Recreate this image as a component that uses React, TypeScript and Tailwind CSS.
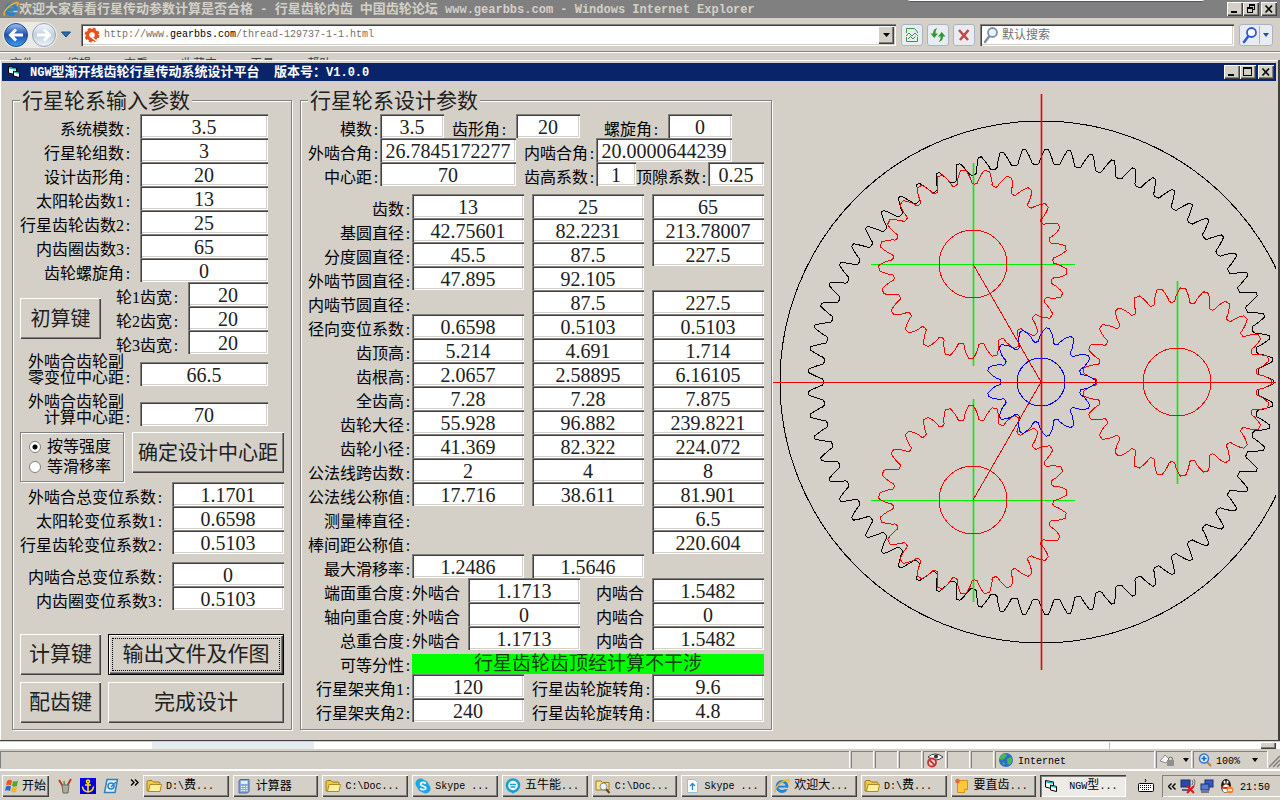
import { useId, type ReactNode } from "react";

const RAISED =
  "bg-[#d4d0c8] shadow-[inset_1px_1px_0_#fff,inset_-1px_-1px_0_#404040,inset_-2px_-2px_0_#808080]";
const SUNKEN =
  "bg-white shadow-[inset_1px_1px_0_#808080,inset_2px_2px_0_#404040,inset_-1px_-1px_0_#fff,inset_-2px_-2px_0_#d4d0c8]";

/* ---------- text helpers ---------- */

/** Small UI text: Chinese at the inherited size, Latin runs in a narrower mono. */
function Mixed({ text, latin = "text-[10px]" }: { text: string; latin?: string }) {
  return (
    <span className="whitespace-pre">
      {text.split(/([\x20-\x7e]+)/).map((part, i) =>
        i % 2 === 1 ? (
          <span key={i} className={`font-['Liberation_Mono',monospace] ${latin}`}>
            {part}
          </span>
        ) : (
          part
        ),
      )}
    </span>
  );
}

function LabelText({ text }: { text: string }) {
  if (!text.endsWith(":")) return <>{text}</>;
  return (
    <>
      {text.slice(0, -1)}
      <span className="inline-block w-2 text-center">:</span>
    </>
  );
}

function FieldLabel({
  id,
  htmlFor,
  text,
  className = "",
}: {
  id?: string;
  htmlFor?: string;
  text: string;
  className?: string;
}) {
  return (
    <label
      id={id}
      htmlFor={htmlFor}
      className={`block h-6 shrink-0 text-right text-base leading-8 whitespace-nowrap ${className}`}
    >
      <LabelText text={text} />
    </label>
  );
}

function Box({
  id,
  labelledBy,
  value,
  width,
}: {
  id?: string;
  labelledBy?: string;
  value: string;
  width: string;
}) {
  return (
    <input
      id={id}
      aria-labelledby={labelledBy}
      defaultValue={value}
      className={`h-6 shrink-0 pt-0.5 text-center text-xl leading-[22px] text-[#202020] outline-none ${SUNKEN} ${width}`}
    />
  );
}

/** Label followed by one text box. */
function Field({
  label,
  value,
  labelWidth,
  width,
  gap = "gap-2",
}: {
  label: string;
  value: string;
  labelWidth: string;
  width: string;
  gap?: string;
}) {
  const id = useId();
  return (
    <div className={`flex ${gap}`}>
      <FieldLabel htmlFor={id} text={label} className={labelWidth} />
      <Box id={id} value={value} width={width} />
    </div>
  );
}

/** Text box whose label takes two lines. */
function TallField({ top, bottom, value }: { top: string; bottom: string; value: string }) {
  const id = useId();
  return (
    <div className="flex items-end gap-2">
      <label htmlFor={id} className="block w-28 text-right text-base leading-4">
        <span className="block pr-2">{top}</span>
        <LabelText text={bottom} />
      </label>
      <Box id={id} value={value} width="w-32" />
    </div>
  );
}

function PushButton({
  children,
  className = "",
  focused = false,
}: {
  children: ReactNode;
  className?: string;
  focused?: boolean;
}) {
  return (
    <button
      type="button"
      className={`flex h-[41px] shrink-0 items-center justify-center whitespace-nowrap text-[#202020] ${RAISED} ${
        focused ? "border border-black p-[3px]" : ""
      } ${className}`}
    >
      {focused ? (
        <span className="flex h-full w-full items-center justify-center border border-dotted border-black">
          {children}
        </span>
      ) : (
        children
      )}
    </button>
  );
}

function GroupBox({
  title,
  className = "",
  children,
}: {
  title: string;
  className?: string;
  children: ReactNode;
}) {
  return (
    <fieldset
      className={`relative shrink-0 border border-[#808080] px-[7px] pt-[13px] pb-[6px] shadow-[1px_1px_0_#fff,inset_1px_1px_0_#fff] ${className}`}
    >
      <legend className="absolute -top-3 left-[7px] bg-[#d4d0c8] px-0.5 text-[21px] leading-6 text-[#202020]">
        {title}
      </legend>
      {children}
    </fieldset>
  );
}

/* ---------- input panel ---------- */

const INPUTS = [
  ["系统模数:", "3.5"],
  ["行星轮组数:", "3"],
  ["设计齿形角:", "20"],
  ["太阳轮齿数1:", "13"],
  ["行星齿轮齿数2:", "25"],
  ["内齿圈齿数3:", "65"],
  ["齿轮螺旋角:", "0"],
];

const OUTER_SHIFT = [
  ["外啮合总变位系数:", "1.1701"],
  ["太阳轮变位系数1:", "0.6598"],
  ["行星齿轮变位系数2:", "0.5103"],
];

const INNER_SHIFT = [
  ["内啮合总变位系数:", "0"],
  ["内齿圈变位系数3:", "0.5103"],
];

const RADIO =
  "size-3 appearance-none rounded-full border border-[#808080] bg-white checked:bg-[radial-gradient(circle,#000_2px,#fff_3px)]";

function InputPanel() {
  return (
    <GroupBox title="行星轮系输入参数" className="w-[280px]">
      {INPUTS.map(([label, value]) => (
        <Field key={label} label={label} value={value} labelWidth="w-28" width="w-32" />
      ))}
      <div className="flex justify-between pr-4">
        <PushButton className="mt-4 w-[81px] text-xl">初算键</PushButton>
        <div>
          <Field label="轮1齿宽:" value="20" labelWidth="w-16" width="w-20" />
          <Field label="轮2齿宽:" value="20" labelWidth="w-16" width="w-20" />
          <Field label="轮3齿宽:" value="20" labelWidth="w-16" width="w-20" />
        </div>
      </div>
      <TallField top="外啮合齿轮副" bottom="零变位中心距:" value="66.5" />
      <div className="mt-2">
        <TallField top="外啮合齿轮副" bottom="计算中心距:" value="70" />
      </div>
      <div className="mt-[6px] flex items-start justify-between">
        <div className="flex h-[50px] w-[104px] flex-col justify-center border border-[#808080] pl-2 text-base leading-5 shadow-[1px_1px_0_#fff,inset_1px_1px_0_#fff]">
          <label className="flex items-center gap-1.5">
            <input type="radio" name="method" defaultChecked className={RADIO} />
            按等强度
          </label>
          <label className="flex items-center gap-1.5">
            <input type="radio" name="method" className={RADIO} />
            等滑移率
          </label>
        </div>
        <PushButton className="w-[152px] text-xl">确定设计中心距</PushButton>
      </div>
      {OUTER_SHIFT.map(([label, value]) => (
        <Field key={label} label={label} value={value} labelWidth="w-36" width="w-28" />
      ))}
      <div className="mt-2">
        {INNER_SHIFT.map(([label, value]) => (
          <Field key={label} label={label} value={value} labelWidth="w-36" width="w-28" />
        ))}
      </div>
      <div className="mt-6 grid grid-cols-[81px_1fr] gap-[7px] text-[21px]">
        <PushButton>计算键</PushButton>
        <PushButton focused>输出文件及作图</PushButton>
        <PushButton>配齿键</PushButton>
        <PushButton>完成设计</PushButton>
      </div>
    </GroupBox>
  );
}

/* ---------- design panel ---------- */

// sun, planet, ring
const DESIGN: [string, string, string, string][] = [
  ["齿数:", "13", "25", "65"],
  ["基圆直径:", "42.75601", "82.2231", "213.78007"],
  ["分度圆直径:", "45.5", "87.5", "227.5"],
  ["外啮节圆直径:", "47.895", "92.105", ""],
  ["内啮节圆直径:", "", "87.5", "227.5"],
  ["径向变位系数:", "0.6598", "0.5103", "0.5103"],
  ["齿顶高:", "5.214", "4.691", "1.714"],
  ["齿根高:", "2.0657", "2.58895", "6.16105"],
  ["全齿高:", "7.28", "7.28", "7.875"],
  ["齿轮大径:", "55.928", "96.882", "239.8221"],
  ["齿轮小径:", "41.369", "82.322", "224.072"],
  ["公法线跨齿数:", "2", "4", "8"],
  ["公法线公称值:", "17.716", "38.611", "81.901"],
  ["测量棒直径:", "", "", "6.5"],
  ["棒间距公称值:", "", "", "220.604"],
  ["最大滑移率:", "1.2486", "1.5646", ""],
];

const OVERLAP = [
  ["端面重合度:", "1.1713", "1.5482"],
  ["轴向重合度:", "0", "0"],
  ["总重合度:", "1.1713", "1.5482"],
];

const ANGLES = [
  ["行星架夹角1:", "120", "9.6"],
  ["行星架夹角2:", "240", "4.8"],
];

function DesignRow({ row }: { row: [string, string, string, string] }) {
  const id = useId();
  const [label, ...values] = row;
  return (
    <div className="grid grid-cols-[96px_112px_112px_112px] gap-x-2">
      <FieldLabel id={id} text={label} className="-mr-2" />
      {values.map((value, i) =>
        value ? <Box key={i} labelledBy={id} value={value} width="w-28" /> : <span key={i} />,
      )}
    </div>
  );
}

function OverlapRow({ label, outer, inner }: { label: string; outer: string; inner: string }) {
  const id = useId();
  return (
    <div className="flex">
      <FieldLabel id={id} text={label} className="w-[104px]" />
      <FieldLabel id={`${id}-o`} text="外啮合" className="w-12" />
      <div className="ml-2 flex">
        <Box labelledBy={`${id} ${id}-o`} value={outer} width="w-28" />
      </div>
      <FieldLabel id={`${id}-i`} text="内啮合" className="ml-4 w-12" />
      <div className="ml-auto flex">
        <Box labelledBy={`${id} ${id}-i`} value={inner} width="w-28" />
      </div>
    </div>
  );
}

function DesignPanel() {
  return (
    <GroupBox title="行星轮系设计参数" className="w-[472px]">
      <div className="flex">
        <Field label="模数:" value="3.5" labelWidth="w-[72px]" width="w-16" gap="gap-0" />
        <Field label="齿形角:" value="20" labelWidth="w-16" width="w-16" />
        <Field label="螺旋角:" value="0" labelWidth="w-20" width="w-16" />
      </div>
      <div className="flex">
        <Field label="外啮合角:" value="26.7845172277" labelWidth="w-[72px]" width="w-[136px]" gap="gap-0" />
        <Field label="内啮合角:" value="20.0000644239" labelWidth="w-20" width="w-[136px]" gap="gap-0" />
      </div>
      <div className="flex">
        <Field label="中心距:" value="70" labelWidth="w-[72px]" width="w-[136px]" gap="gap-0" />
        <Field label="齿高系数:" value="1" labelWidth="w-20" width="w-10" gap="gap-0" />
        <Field label="顶隙系数:" value="0.25" labelWidth="w-[72px]" width="w-14" gap="gap-0" />
      </div>
      <div className="mt-2">
        {DESIGN.map((row) => (
          <DesignRow key={row[0]} row={row} />
        ))}
        {OVERLAP.map(([label, outer, inner]) => (
          <OverlapRow key={label} label={label} outer={outer} inner={inner} />
        ))}
      </div>
      <div className="flex items-end">
        <span className="block h-6 w-[104px] text-right text-base leading-8">
          <LabelText text="可等分性:" />
        </span>
        <output className="block h-5 flex-1 bg-[#00ff00] text-center text-[19px] leading-5 text-[#104010]">
          行星齿轮齿顶经计算不干涉
        </output>
      </div>
      {ANGLES.map(([label, carrier, planet]) => (
        <div key={label} className="flex justify-between">
          <Field label={label} value={carrier} labelWidth="w-[104px]" width="w-28" gap="gap-0" />
          <Field label="行星齿轮旋转角:" value={planet} labelWidth="w-32" width="w-28" gap="gap-0" />
        </div>
      ))}
    </GroupBox>
  );
}

/* ---------- gear drawing ---------- */

const SCALE = 136 / 70; // px per mm
const ALPHA = (20 * Math.PI) / 180;

type Gear = { z: number; x: number; base: number; inner: number; outer: number };

const SUN: Gear = { z: 13, x: 0.6598, base: 21.378, inner: 20.685, outer: 27.964 };
const PLANET: Gear = { z: 25, x: 0.5103, base: 41.112, inner: 41.161, outer: 48.441 };
const RING: Gear = { z: 65, x: 0.5103, base: 106.89, inner: 112.036, outer: 119.911 };

/** Involute outline, first tooth centred on `phase` degrees (clockwise). */
function gearPath({ z, x, base, inner, outer }: Gear, cx: number, cy: number, phase: number) {
  const inv = (r: number) => (r <= base ? 0 : Math.sqrt((r / base) ** 2 - 1) - Math.acos(base / r));
  const half = (r: number) =>
    (Math.PI / 2 + 2 * x * Math.tan(ALPHA)) / z + Math.tan(ALPHA) - ALPHA - inv(r);
  const at = (r: number, a: number) =>
    `${(cx + r * SCALE * Math.cos(a)).toFixed(2)} ${(cy + r * SCALE * Math.sin(a)).toFixed(2)}`;

  const steps = 6;
  const foot = inner + (outer - inner) * 0.2;
  let d = "";
  for (let i = 0; i < z; i++) {
    const mid = (phase * Math.PI) / 180 + (i * 2 * Math.PI) / z;
    const gap = Math.PI / z;
    if (i === 0) d += `M${at(inner, mid - gap)}`;
    d += `Q${at(inner, mid - half(foot))} ${at(foot, mid - half(foot))}`;
    for (let s = 1; s <= steps; s++) {
      const r = foot + ((outer - foot) * s) / steps;
      d += `L${at(r, mid - half(r))}`;
    }
    for (let s = steps; s >= 0; s--) {
      const r = foot + ((outer - foot) * s) / steps;
      d += `L${at(r, mid + half(r))}`;
    }
    d += `Q${at(inner, mid + half(foot))} ${at(inner, mid + gap)}`;
  }
  return d + "Z";
}

const PLANETS = [
  { cx: 405, cy: 301, phase: 0 },
  { cx: 201, cy: 183, phase: 4.8 },
  { cx: 201, cy: 419, phase: -4.8 },
];

function AxisLine({ x, y, height, color }: { x: number; y: number; height: number; color: string }) {
  return (
    <line
      x1={x + 0.5}
      x2={x + 0.5}
      y1={y}
      y2={y + height}
      stroke={color}
      strokeWidth="1.6"
      shapeRendering="geometricPrecision"
    />
  );
}

function GearDrawing() {
  return (
    <svg className="min-w-0 flex-1 self-stretch" fill="none" shapeRendering="crispEdges" role="img">
      <circle cx="269" cy="301" r="261" stroke="#000" />
      <path d={gearPath(RING, 269, 301, 0)} stroke="#000" />
      {PLANETS.map(({ cx, cy, phase }) => (
        <g key={cy}>
          {cx < 269 && <rect x={cx - 102} y={cy} width="204" height="1" fill="#00ee00" />}
          <AxisLine x={cx} y={cy - 101} height={203} color="#00ee00" />
          <circle cx={cx} cy={cy} r="34" stroke="#f00" />
          <path d={gearPath(PLANET, cx, cy, phase)} stroke="#f00" />
        </g>
      ))}
      <path d={gearPath(SUN, 269, 301, 0)} stroke="#00f" />
      <circle cx="269" cy="301" r="24" stroke="#00f" />
      <path d="M201 183l68 118l-68 118" stroke="#e60000" />
      <AxisLine x={269} y={13} height={576} color="#e60000" />
      <rect x="1" y="301" width="100%" height="1" fill="#e60000" />
    </svg>
  );
}

/* ---------- window chrome ---------- */

function CaptionButtons({ restore = false }: { restore?: boolean }) {
  const button = `flex h-[14px] w-4 items-center justify-center ${RAISED}`;
  return (
    <div className="ml-auto flex">
      <button type="button" aria-label="最小化" className={button}>
        <svg width="10" height="10" fill="#000">
          <rect x="1" y="7" width="6" height="2" />
        </svg>
      </button>
      <button type="button" aria-label="最大化" className={button}>
        <svg width="10" height="10" fill="none" stroke="#000" shapeRendering="crispEdges">
          {restore ? (
            <path d="M3.500 3V1M3 1h6M3 .5h6M8.500 1v4.500M7 5.500h2M1 3.500h6M1 4.500h6M1.500 4v5M6.500 4v5M1 8.500h6" />
          ) : (
            <path d="M.5.5h8v8h-8zM0 1.500h9" />
          )}
        </svg>
      </button>
      <button type="button" aria-label="关闭" className={`ml-0.5 ${button}`}>
        <svg width="10" height="10" stroke="#000" strokeWidth="1.600">
          <path d="M1.500 1.500l6.500 7M8 1.500l-6.500 7" />
        </svg>
      </button>
    </div>
  );
}

function IeIcon() {
  return (
    <svg width="16" height="16" viewBox="0 0 16 16" fill="none" className="shrink-0">
      <circle cx="8" cy="8.500" r="5" stroke="#1c86dc" strokeWidth="2.800" />
      <path d="M4 8.600h9" stroke="#1c86dc" strokeWidth="2" />
      <path d="M10.500 10.500h4" stroke="#d4d0c8" strokeWidth="1.500" />
      <path d="M1.500 14.500C-.5 11 6 3 14.500 1.500c1 1 .3 2.500-.5 3.500" stroke="#f0b429" strokeWidth="1.500" />
    </svg>
  );
}

/** Two stacked little forms, outlined for light or dark bars. */
function FormIcon() {
  return (
    <svg width="16" height="16" viewBox="0 0 16 16" className="shrink-0">
      <path d="M2.500 2.500l8 1.500v7l-8-2z" fill="#fff" stroke="#000" />
      <path d="M3 3l7 1.300v1.500L3 4.500z" fill="#10b0b0" />
      <path d="M7.500 7l6 1.500v5l-6-1.500z" fill="#fff" stroke="#000" />
      <path d="M8 7.600l5 1.200v1.200L8 8.800z" fill="#10c0c0" />
    </svg>
  );
}

function NavButton({ forward = false }: { forward?: boolean }) {
  return (
    <button type="button" aria-label={forward ? "前进" : "后退"}>
      <svg width="26" height="26" viewBox="0 0 26 26">
        <defs>
          <linearGradient id={forward ? "fwd" : "back"} x1="0" y1="0" x2="0" y2="1">
            <stop offset="0" stopColor={forward ? "#f4f7fb" : "#9fc0ee"} />
            <stop offset="0.5" stopColor={forward ? "#c3cfde" : "#1d4fae"} />
            <stop offset="1" stopColor={forward ? "#eef3f9" : "#3fa0f0"} />
          </linearGradient>
        </defs>
        <circle
          cx="13"
          cy="13"
          r="11.500"
          fill={forward ? "url(#fwd)" : "url(#back)"}
          stroke={forward ? "#98a4b4" : "#234a8c"}
        />
        <path
          d={forward ? "M6 13h12M13 7.500l5.500 5.500-5.500 5.500" : "M20 13H8M13 7.500L7.500 13l5.500 5.500"}
          fill="none"
          stroke="#fff"
          strokeWidth="3"
        />
      </svg>
    </button>
  );
}

function Magnifier({ color, fill = "#e8f2fc" }: { color: string; fill?: string }) {
  return (
    <svg width="16" height="18" viewBox="0 0 16 18" className="shrink-0">
      <path d="M6.500 10L2 16" stroke={color} strokeWidth="2.500" strokeLinecap="round" />
      <circle cx="9.500" cy="6.500" r="4.500" fill={fill} stroke={color} strokeWidth="1.800" />
    </svg>
  );
}

const TOOL = "flex h-[22px] w-[22px] items-center justify-center rounded-[3px] border border-[#a9b4c2] bg-[#e9edf2]";
const MENU = ["文件(F)", "编辑(E)", "查看(V)", "收藏夹(A)", "工具(T)", "帮助(H)"];

function BrowserTop() {
  return (
    <header>
      <div className="relative flex h-[18px] items-center bg-[#808080] pr-[3px] pl-[3px] text-[13px] leading-4 font-bold text-[#d4d0c8]">
        <IeIcon />
        <Mixed
          text="欢迎大家看看行星传动参数计算是否合格 - 行星齿轮内齿 中国齿轮论坛 www.gearbbs.com - Windows Internet Explorer"
          latin="text-xs"
        />
        <span className="absolute top-0 right-[76px] h-0.5 w-[296px] rounded-b border-b border-[#38606c] bg-white" />
        <CaptionButtons restore />
      </div>
      <div className="flex h-[34px] items-center border-b border-[#808080] pr-[7px] pl-[3px]">
        <div className="flex items-center gap-0.5 rounded-full bg-[#eceae6]">
          <NavButton />
          <NavButton forward />
        </div>
        <button type="button" aria-label="历史" className="mr-[10px] ml-[4px]">
          <svg width="10" height="7" viewBox="0 0 10 7">
            <path d="M.5 1h9L5 6z" fill="#2a70a8" stroke="#184a78" />
          </svg>
        </button>
        <div className={`flex h-[22px] min-w-0 flex-1 items-center pr-0.5 pl-[3px] ${SUNKEN}`}>
          <svg width="16" height="16" viewBox="0 0 16 16" className="shrink-0">
            <circle cx="8" cy="8" r="4.500" fill="none" stroke="#e8501c" strokeWidth="3.500" />
            <circle cx="8" cy="8" r="6.500" fill="none" stroke="#e8501c" strokeWidth="2" strokeDasharray="3 2.100" />
            <path d="M8 10.500l5 4" stroke="#fff" strokeWidth="1.500" />
          </svg>
          <div
            role="textbox"
            aria-label="地址"
            contentEditable
            suppressContentEditableWarning
            className="ml-1 min-w-0 flex-1 font-['Liberation_Mono',monospace] text-[10px] whitespace-nowrap text-[#707070] outline-none"
          >
            http://www.<span className="text-black">gearbbs.com</span>/thread-129737-1-1.html
          </div>
          <button type="button" aria-label="展开" className={`flex h-[18px] w-4 items-center justify-center ${RAISED}`}>
            <svg width="7" height="4">
              <path d="M0 0h7L3.500 4z" />
            </svg>
          </button>
        </div>
        <div className="ml-[5px] flex gap-1">
          <button type="button" aria-label="兼容性视图" className={TOOL}>
            <svg width="14" height="16" viewBox="0 0 14 16" fill="none" stroke="#3c9448">
              <path d="M1.500 6V1.500h8L12.500 5v1M1.500 10v4.500h11V10" />
              <path d="M1 9l3-3 3 3 3-3 3 3M3 12l2.500-2.500L8 12l2.500-2.500" />
            </svg>
          </button>
          <button type="button" aria-label="刷新" className={TOOL}>
            <svg width="16" height="16" viewBox="0 0 16 16" fill="#2f9a2f">
              <path d="M7.500 1C4.500 1.500 3 3.500 3 6.500H.5L4.300 11 8 6.500H5.500C5.500 4 6 2.500 7.500 1z" />
              <path d="M8.500 15c3-.5 4.500-2.500 4.500-5.500h2.500L11.700 5 8 9.500h2.500c0 2.500-.5 4-2 5.500z" />
            </svg>
          </button>
          <button type="button" aria-label="停止" className={TOOL}>
            <svg width="14" height="14" stroke="#c04848" strokeWidth="2.600">
              <path d="M2 2l9 10M11.500 2L3 12" />
            </svg>
          </button>
        </div>
        <label className={`ml-[5px] flex h-[22px] w-[254px] items-center pl-[3px] ${SUNKEN}`}>
          <Magnifier color="#8090a8" />
          <input
            aria-label="搜索"
            placeholder="默认搜索"
            className="ml-[3px] min-w-0 flex-1 bg-transparent text-xs outline-none placeholder:text-[#707070]"
          />
        </label>
        <div className="ml-[5px] flex h-[22px] w-[34px] items-center rounded-[3px] border border-[#a9b4c2] bg-[#e9edf2]">
          <button type="button" aria-label="搜索" className="flex w-5 justify-center border-r border-[#a9b4c2]">
            <Magnifier color="#2a58d8" fill="#fff" />
          </button>
          <button type="button" aria-label="搜索选项" className="flex flex-1 justify-center">
            <svg width="6" height="4">
              <path d="M0 0h6L3 4z" fill="#2050a0" />
            </svg>
          </button>
        </div>
      </div>
      <nav className="flex h-2 gap-[15px] overflow-hidden border-t border-white pt-[3px] pl-[10px] text-xs leading-4 text-[#404040]">
        {MENU.map((item) => (
          <Mixed key={item} text={item} />
        ))}
      </nav>
    </header>
  );
}

/* ---------- status bar and taskbar ---------- */

const PANE = "h-[17px] shrink-0 border-t border-l border-[#808080] shadow-[1px_0_0_#fff]";

function StatusBar() {
  return (
    <div className="flex h-[18px] gap-0.5 text-xs">
      <div className={`${PANE} min-w-0 flex-1`} />
      <div className={`${PANE} w-[22px]`} />
      <div className={`${PANE} w-[22px]`} />
      <div className={`${PANE} w-[22px]`} />
      <div className={`${PANE} flex w-[22px] items-center justify-center`}>
        <svg width="18" height="16" viewBox="0 0 18 16" fill="none">
          <path d="M2 5q7-6 15 0q-7 6-15 0z" fill="#fff" stroke="#404040" />
          <circle cx="10" cy="4.500" r="2" fill="#303030" />
          <circle cx="6" cy="10.500" r="4" fill="#f0d8d8" stroke="#c83030" strokeWidth="1.800" />
          <path d="M3.500 8l5 5" stroke="#c83030" strokeWidth="1.800" />
        </svg>
      </div>
      <div className={`${PANE} w-[22px]`} />
      <div className={`${PANE} w-[22px]`} />
      <div className={`${PANE} flex w-[159px] items-center gap-1 pl-0.5`}>
        <svg width="16" height="16" viewBox="0 0 16 16">
          <circle cx="8" cy="8" r="7" fill="#2a6fd0" />
          <path d="M4 2.500q4-2 5 1L6 7 3 8 1.500 6zM9 7l4-2 1.500 3-2.500 5-2.500-1zM4 10l3 1-1 3z" fill="#4cb84c" />
        </svg>
        <Mixed text="Internet" />
      </div>
      <button type="button" aria-label="保护模式" className={`${PANE} flex w-[35px] items-center justify-center gap-2`}>
        <svg width="16" height="14" viewBox="0 0 16 14">
          <path d="M1 8l5-6 4 4-3 4z" fill="#f4f4f4" stroke="#909090" />
          <rect x="8" y="7" width="7" height="6" fill="#909090" />
          <path d="M9.500 7V5q2-2 4 0v2" fill="none" stroke="#707070" />
        </svg>
        <svg width="6" height="4">
          <path d="M0 0h6L3 4z" />
        </svg>
      </button>
      <button type="button" className={`${PANE} flex w-[74px] items-center pl-1`}>
        <svg width="14" height="14" viewBox="0 0 14 14" fill="none">
          <path d="M9 9l4 4" stroke="#c08030" strokeWidth="2" />
          <circle cx="6" cy="5.500" r="4.500" fill="#d8ecff" stroke="#3878d0" strokeWidth="1.500" />
          <path d="M3.500 5.500h5M6 3v5" stroke="#2060c0" strokeWidth="1.500" />
        </svg>
        <span className="mx-1">
          <Mixed text="100%" />
        </span>
        <svg width="6" height="4" className="ml-2">
          <path d="M0 0h6L3 4z" />
        </svg>
      </button>
      <svg width="11" height="17" className="shrink-0" stroke="#808080" strokeWidth="1.500">
        <path d="M0 16L11 5M4 16l7-7M8 16l3-3" />
      </svg>
    </div>
  );
}

function FolderIcon() {
  return (
    <svg width="16" height="16" viewBox="0 0 16 16" className="shrink-0">
      <path d="M1 13V4q0-1.500 1.500-1.500H6L7.500 4H13q1 0 1 1.500V13z" fill="#f0c848" stroke="#a07818" />
      <path d="M2.500 13.500L4 6.500h11.500L14 13.500z" fill="#fff0a0" stroke="#b08820" />
    </svg>
  );
}

function CalculatorIcon() {
  return (
    <svg width="16" height="16" viewBox="0 0 16 16" className="shrink-0">
      <path d="M4 1.500h9v12l-1.500 1.500H3V3z" fill="#86a8e0" stroke="#4868a8" />
      <path d="M5 3h6.500v3H5z" fill="#e4f0ff" />
      <path d="M5 8.500h7M5 10.500h7M5 12.500h7" stroke="#fff" strokeDasharray="1.500 1" />
    </svg>
  );
}

function SkypeIcon() {
  return (
    <svg width="16" height="16" viewBox="0 0 16 16" className="shrink-0">
      <circle cx="5.500" cy="5.500" r="5" fill="#18a8e8" />
      <circle cx="10.500" cy="10.500" r="5" fill="#18a8e8" />
      <circle cx="8" cy="8" r="6" fill="#18a8e8" />
      <path d="M10.800 5.500Q8 3.500 6 5q-1.500 2 2 3t2.500 3Q8 12.500 5 10.500" fill="none" stroke="#fff" strokeWidth="1.700" />
    </svg>
  );
}

function ChatIcon() {
  return (
    <svg width="16" height="16" viewBox="0 0 16 16" className="shrink-0">
      <path d="M6 13h4l-2 3z" fill="#18a0d0" />
      <circle cx="8" cy="7.500" r="6" fill="#fff" stroke="#18a0d0" strokeWidth="2.500" />
      <path d="M5 6.500h6M5.500 9h5" stroke="#18a0d0" strokeWidth="1.400" />
    </svg>
  );
}

function FileUpIcon() {
  return (
    <svg width="16" height="16" viewBox="0 0 16 16" className="shrink-0" fill="none">
      <path d="M3.500 1.500h7l3 3v10h-10z" fill="#fff" stroke="#8cc4e0" />
      <path d="M8.500 12V6M6 8l2.500-2.500L11 8" stroke="#2888c8" strokeWidth="1.300" />
    </svg>
  );
}

function SearchFolderIcon() {
  return (
    <svg width="16" height="16" viewBox="0 0 16 16" className="shrink-0">
      <path d="M1 12V3h5l1.500 1.500H14V12z" fill="#fbe68c" stroke="#a07818" />
      <path d="M11 11l3.500 4" stroke="#604818" strokeWidth="2" />
      <circle cx="8.500" cy="8.500" r="3.500" fill="#e4f4fc" stroke="#888" />
    </svg>
  );
}

function NoteIcon() {
  return (
    <svg width="16" height="16" viewBox="0 0 16 16" className="shrink-0">
      <path d="M3.500 2.500h10v9l-3 3h-7z" fill="#ffc83c" stroke="#d89010" />
      <path d="M10.500 14.500v-3h3" fill="#fff0b0" stroke="#d89010" />
      <circle cx="3.500" cy="3" r="2.300" fill="#e06840" />
    </svg>
  );
}

const TASKS: { text: string; icon: ReactNode; active?: boolean }[] = [
  { text: "D:\\费...", icon: <FolderIcon /> },
  { text: "计算器", icon: <CalculatorIcon /> },
  { text: "C:\\Doc...", icon: <FolderIcon /> },
  { text: "Skype ...", icon: <SkypeIcon /> },
  { text: "五牛能...", icon: <ChatIcon /> },
  { text: "C:\\Doc...", icon: <SearchFolderIcon /> },
  { text: "Skype ...", icon: <FileUpIcon /> },
  { text: "欢迎大...", icon: <IeIcon /> },
  { text: "D:\\费...", icon: <FolderIcon /> },
  { text: "要直齿...", icon: <NoteIcon /> },
  { text: " NGW型...", icon: <FormIcon />, active: true },
];

function Taskbar() {
  return (
    <footer className="flex h-[30px] items-center border-t border-white pl-0.5 text-xs">
      <button type="button" className={`flex h-[22px] w-[47px] shrink-0 items-center gap-0.5 pl-0.5 ${RAISED}`}>
        <svg width="16" height="16" viewBox="0 0 16 16" className="shrink-0">
          <path d="M3 3q2.500-2 5-.5L7 7.500Q4.500 6 2 7.500z" fill="#e85820" />
          <path d="M9 3q2.500 1 5-.5L13 8q-2.500 1.500-5 0z" fill="#58a828" />
          <path d="M2 8.500q2.500-1.500 5 0L6 13q-2.500-1.500-5 0z" fill="#2868d8" />
          <path d="M8 9q2.500 1.500 5 0l-1 5q-2.500 1-5-.5z" fill="#f0b818" />
        </svg>
        开始
      </button>
      <div className="mr-1 ml-2 flex shrink-0 items-center gap-[7px]">
        <svg width="16" height="16" viewBox="0 0 16 16" fill="none">
          <path d="M2 2l5 8M14 1L9 10" stroke="#c83820" strokeWidth="2" />
          <path d="M7 3l1 8" stroke="#40a040" strokeWidth="1.500" />
          <path d="M5 7h7l-1 8H6z" fill="#a8aca0" stroke="#686c60" />
        </svg>
        <svg width="16" height="16" viewBox="0 0 16 16" fill="none" stroke="#ffe000" strokeWidth="1.600">
          <rect width="16" height="16" fill="#0000e0" stroke="none" />
          <circle cx="8" cy="3.500" r="1.500" />
          <path d="M8 5v9M5 7h6M2.500 8.500Q3 13.500 8 14q5-.5 5.500-5.500" />
        </svg>
        <svg width="16" height="16" viewBox="0 0 16 16" fill="none">
          <path d="M4 1.500h10.500L12 14.500H1.500z" fill="#e0f0fc" stroke="#3080c0" strokeWidth="1.500" />
          <circle cx="8" cy="8" r="3" stroke="#3080c0" strokeWidth="1.500" />
          <path d="M8 9l5-5" stroke="#3080c0" strokeWidth="1.500" />
        </svg>
        <svg width="9" height="7" fill="none" stroke="#000" strokeWidth="1.400" className="mb-1.5 ml-1">
          <path d="M1 .5l3 3-3 3M5 .5l3 3-3 3" />
        </svg>
      </div>
      <div className="flex min-w-0 flex-1 gap-1">
        {TASKS.map(({ text, icon, active }, i) => (
          <button
            key={i}
            type="button"
            className={`flex h-[22px] min-w-0 flex-1 items-center gap-1 overflow-hidden pl-[3px] ${
              active
                ? "bg-[#ecebe7] shadow-[inset_1px_1px_0_#404040,inset_2px_2px_0_#808080,inset_-1px_-1px_0_#fff]"
                : RAISED
            }`}
          >
            {icon}
            <Mixed text={text} />
          </button>
        ))}
      </div>
      <svg width="16" height="16" viewBox="0 0 16 16" className="mr-2 ml-3 shrink-0" fill="none" stroke="#000">
        <path d="M7 1q2 1 0 3" />
        <rect x=".5" y="5.500" width="15" height="8" rx="1" fill="#fff" />
        <path d="M2 7.500h12M2 9.500h12M4 11.500h8" strokeDasharray="1 1" />
      </svg>
      <div className="flex h-[22px] w-[118px] shrink-0 items-center gap-1 border-t border-l border-[#808080] pl-[5px] shadow-[inset_0_-1px_0_#fff]">
        <svg width="8" height="7" fill="none" stroke="#000" strokeWidth="1.400">
          <path d="M3.500.5l-3 3 3 3M7.500.5l-3 3 3 3" />
        </svg>
        <svg width="16" height="16" viewBox="0 0 16 16" fill="none">
          <rect x="1" y="2" width="9" height="7" fill="#2848b0" stroke="#203060" />
          <path d="M2 12h7" stroke="#506090" strokeWidth="2" />
          <path d="M12 2q2 2 0 5M14 1q2 3 0 7" stroke="#707070" />
          <path d="M7 8l7 7M14 8l-7 7" stroke="#e01818" strokeWidth="2" />
        </svg>
        <svg width="14" height="16" viewBox="0 0 14 16">
          <rect x="5" y="2" width="8" height="7" fill="#3858c8" stroke="#203060" />
          <rect x="1" y="6" width="8" height="6" fill="#5078e0" stroke="#203060" />
          <path d="M1 14h8" stroke="#707888" strokeWidth="2" />
        </svg>
        <svg width="16" height="16" viewBox="0 0 16 16">
          <ellipse cx="8" cy="8" rx="5" ry="7" fill="#181818" />
          <ellipse cx="8" cy="10.500" rx="3.500" ry="4" fill="#fff" />
          <ellipse cx="6.500" cy="4" rx="1" ry="1.500" fill="#fff" />
          <ellipse cx="9.500" cy="4" rx="1" ry="1.500" fill="#fff" />
          <path d="M6 5.500h4L8 7z" fill="#f0a020" />
          <path d="M3 8q5 2 10 0v2q-5 2-10 0z" fill="#e02818" />
          <circle cx="12" cy="12" r="3.500" fill="#f08820" />
          <path d="M10 12h4" stroke="#fff" strokeWidth="1.500" />
        </svg>
        <time className="ml-0.5">
          <Mixed text="21:50" />
        </time>
      </div>
    </footer>
  );
}

/* ---------- page ---------- */

export default function App() {
  return (
    <div className="flex min-h-screen flex-col overflow-hidden bg-[#d4d0c8] font-['Liberation_Serif','Noto_Sans_CJK_SC',serif] text-black">
      <BrowserTop />
      <main className="border-r-2 border-b border-[#404040] px-0.5 pt-[3px] shadow-[inset_1px_1px_0_#fff]">
        <div className="flex h-[18px] items-center bg-[#0a246a] pr-0.5 pl-1 text-[13px] leading-4 font-bold text-white">
          <FormIcon />
          <span className="ml-2">
            <Mixed text="NGW型渐开线齿轮行星传动系统设计平台  版本号：V1.0.0" latin="text-xs" />
          </span>
          <CaptionButtons />
        </div>
        <div className="flex items-start pl-[10px]">
          <div className="flex shrink-0 gap-2 pt-[19px] pb-[10px]">
            <InputPanel />
            <DesignPanel />
          </div>
          <GearDrawing />
        </div>
      </main>
      <div className="mt-px flex h-[7px] bg-white">
        <span className="ml-[152px] w-[162px] bg-[#e4ecf0]" />
        <span className="mr-[150px] ml-auto border-r border-[#c0c0c0]" />
        <span className={`mr-1 w-4 ${RAISED}`} />
      </div>
      <div className="mt-0.5 border-b border-white">
        <StatusBar />
      </div>
      <Taskbar />
    </div>
  );
}
